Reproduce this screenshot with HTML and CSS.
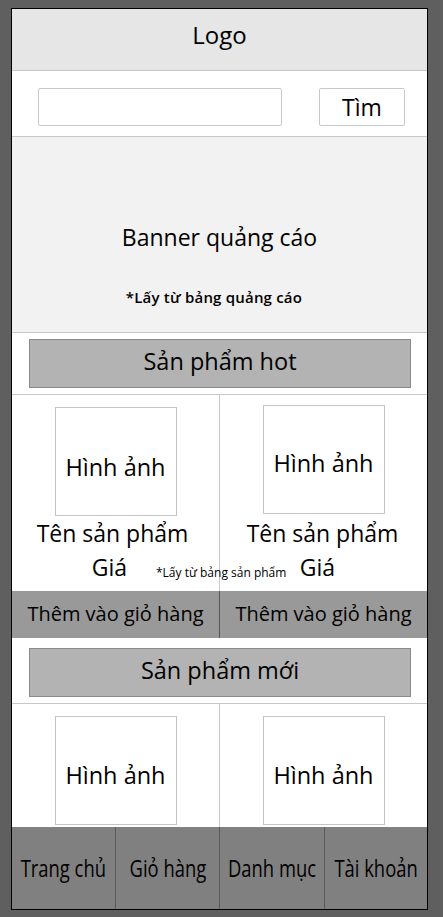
FILE: index.html
```html
<!DOCTYPE html>
<html lang="vi">
<head>
<meta charset="utf-8">
<title>Mockup</title>
<link rel="stylesheet" href="styles.css">
</head>
<body>
<div class="frame">
  <header class="logo">Logo</header>
  <div class="search">
    <div class="search-input"></div>
    <div class="search-btn">Tìm</div>
  </div>
  <section class="banner">
    <div class="banner-title">Banner quảng cáo</div>
    <div class="banner-note">*Lấy từ bảng quảng cáo</div>
  </section>
  <div class="section-head first">
    <div class="section-bar">Sản phẩm hot</div>
  </div>
  <div class="grid hot">
    <div class="cell left">
      <div class="img-box">Hình ảnh</div>
      <div class="p-name">Tên sản phẩm</div>
      <div class="p-price">Giá</div>
    </div>
    <div class="cell right">
      <div class="img-box">Hình ảnh</div>
      <div class="p-name">Tên sản phẩm</div>
      <div class="p-price">Giá</div>
    </div>
    <div class="grid-note">*Lấy từ bảng sản phẩm</div>
  </div>
  <div class="cart-row">
    <div class="cart-btn">Thêm vào giỏ hàng</div>
    <div class="cart-btn">Thêm vào giỏ hàng</div>
  </div>
  <div class="section-head second">
    <div class="section-bar">Sản phẩm mới</div>
  </div>
  <div class="grid new">
    <div class="cell left">
      <div class="img-box">Hình ảnh</div>
    </div>
    <div class="cell right">
      <div class="img-box">Hình ảnh</div>
    </div>
  </div>
  <nav class="nav">
    <div class="nav-item"><span>Trang chủ</span></div>
    <div class="nav-item"><span>Giỏ hàng</span></div>
    <div class="nav-item"><span>Danh mục</span></div>
    <div class="nav-item"><span>Tài khoản</span></div>
  </nav>
</div>
</body>
</html>
```

FILE: styles.css
```css
* { box-sizing: border-box; }
html, body { margin: 0; height: 100%; }
body {
  background: #5f5f5f;
  padding: 8px 0 0 11px;
  font-family: "Open Sans", "Noto Sans", sans-serif;
  color: #000;
}
.frame {
  width: 417px;
  border: 1px solid #000;
  background: #fff;
  display: flex;
  flex-direction: column;
}
.logo {
  height: 62px;
  background: #e6e6e6;
  border-bottom: 1px solid #c6c6c6;
  display: flex;
  align-items: center;
  justify-content: center;
  font-size: 24px;
  padding-bottom: 11px;
}
.search {
  height: 66px;
  border-bottom: 1px solid #c8c8c8;
  display: flex;
  gap: 37px;
  padding: 17px 0 0 26px;
}
.search-input {
  width: 244px;
  height: 38px;
  border: 1px solid #c8c8c8;
  border-radius: 2px;
}
.search-btn {
  width: 86px;
  height: 38px;
  border: 1px solid #c8c8c8;
  border-radius: 2px;
  display: flex;
  align-items: center;
  justify-content: center;
  font-size: 23px;
  padding-bottom: 1px;
}
.banner {
  height: 196px;
  background: #f2f2f2;
  border-bottom: 1px solid #c8c8c8;
  display: flex;
  flex-direction: column;
  align-items: center;
  padding-top: 85px;
}
.banner-title {
  font-size: 23px;
  line-height: 30px;
}
.banner-note {
  margin-top: 35px;
  margin-right: 11px;
  font-size: 15px;
  font-weight: 600;
  line-height: 20px;
  letter-spacing: 0.2px;
}
.section-head {
  border-bottom: 1px solid #c8c8c8;
  padding-left: 17px;
}
.section-head.first { height: 62px; padding-top: 6px; }
.section-head.second { height: 66px; padding-top: 10px; }
.section-bar {
  width: 382px;
  height: 49px;
  background: #b3b3b3;
  border: 1px solid #8a8a8a;
  display: flex;
  align-items: center;
  justify-content: center;
  font-size: 23.5px;
  padding-bottom: 6px;
}
.grid {
  position: relative;
  display: grid;
  grid-template-columns: 208px 207px;
}
.grid.hot { height: 196px; }
.grid.new { height: 123px; }
.cell {
  display: flex;
  flex-direction: column;
  align-items: center;
}
.cell.left { border-right: 1px solid #c8c8c8; }
.grid.hot .cell.left { padding-top: 12px; }
.grid.hot .cell.right { padding-top: 10px; }
.grid.new .cell { padding-top: 12px; }
.img-box {
  width: 122px;
  height: 109px;
  border: 1px solid #c4c4c4;
  display: flex;
  align-items: center;
  justify-content: center;
  font-size: 23.5px;
  padding-top: 11px;
}
.grid.hot .cell.right .img-box { padding-top: 7px; }
.grid.new .img-box { padding-top: 8px; }
.p-name {
  font-size: 23px;
  line-height: 34px;
}
.grid.hot .cell.left .p-name { margin-right: 6px; }
.grid.hot .cell.right .p-name { margin-top: 2px; margin-right: 2px; }
.p-price {
  font-size: 23px;
  line-height: 34px;
  margin-right: 12px;
}
.grid-note {
  position: absolute;
  left: 144px;
  top: 170px;
  font-size: 12px;
  line-height: 16px;
  white-space: nowrap;
}
.cart-row {
  height: 47px;
  background: #999999;
  display: grid;
  grid-template-columns: 208px 207px;
}
.cart-btn {
  display: flex;
  align-items: center;
  justify-content: center;
  font-size: 20px;
  padding-bottom: 3px;
}
.cart-btn:first-child { border-right: 1px solid #555; }
.nav {
  height: 82px;
  background: #808080;
  display: grid;
  grid-template-columns: 104px 104px 105px 102px;
}
.nav-item {
  display: flex;
  align-items: center;
  justify-content: center;
  font-size: 23px;
  border-right: 1px solid #5a5a5a;
}
.nav-item:last-child { border-right: none; }
.nav-item span {
  display: inline-block;
  transform: scaleX(0.8);
  white-space: nowrap;
}
```
